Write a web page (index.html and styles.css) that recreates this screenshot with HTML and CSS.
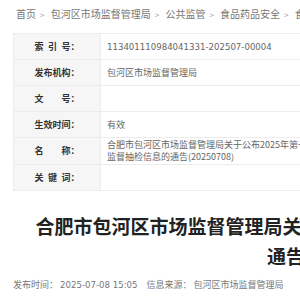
FILE: index.html
```html
<!DOCTYPE html>
<html lang="zh-CN">
<head>
    <meta charset="UTF-8">
    <title>合肥市包河区市场监督管理局</title>
    <link rel="stylesheet" href="styles.css">
</head>
<body>
    <div class="crumb">
        <a href="#">首页</a><span class="sep">&gt;</span>
        <a href="#">包河区市场监督管理局</a><span class="sep">&gt;</span>
        <a href="#">公共监管</a><span class="sep">&gt;</span>
        <a href="#">食品药品安全</a><span class="sep">&gt;</span>
        <a href="#">食品安全抽检</a>
    </div>
    <div class="main">
        <table class="info">
            <tr><th>索&ensp;引&ensp;号：</th><td class="num">113401110984041331-202507-00004</td></tr>
            <tr><th>发布机构：</th><td>包河区市场监督管理局</td></tr>
            <tr><th>文　　号：</th><td></td></tr>
            <tr><th>生效时间：</th><td>有效</td></tr>
            <tr><th>名　　称：</th><td>合肥市包河区市场监督管理局关于公布2025年第十五期食品安全<br>监督抽检信息的通告(20250708)</td></tr>
            <tr><th>关&ensp;键&ensp;词：</th><td></td></tr>
        </table>
        <h1 class="title">合肥市包河区市场监督管理局关于公布2025年第十五期食品<br>通告</h1>
        <div class="meta">
            <span>发布时间： <span class="num">2025-07-08 15:05</span></span>
            <span class="source">信息来源： 包河区市场监督管理局</span>
        </div>
    </div>
</body>
</html>
```

FILE: styles.css
```css
html, body {
    overflow: hidden;
}
body {
    margin: 0;
    padding: 0;
    font-family: "Noto Sans CJK SC", sans-serif;
    color: #333;
    background: #fff;
}
.crumb {
    padding: 7px 16px 0;
    font-size: 10px;
    line-height: 14px;
    white-space: nowrap;
    color: #777;
}
.crumb a {
    color: #777;
    text-decoration: none;
}
.crumb .sep {
    margin: 0 4px;
    font-size: 8px;
    color: #999;
}
.main {
    width: 546px;
    padding: 11px 13px 0;
}
.info {
    width: 100%;
    border-collapse: collapse;
    font-size: 9px;
    line-height: 12px;
}
.info th, .info td {
    height: 23px;
    padding: 1px 6px;
    border: 1px solid #ececec;
    vertical-align: middle;
}
.info th {
    width: 74px;
    background: #f6f6f6;
    color: #333;
    font-weight: bold;
    text-align: center;
    white-space: nowrap;
}
.info td {
    color: #666;
    text-align: left;
}
.num {
    font-family: "DejaVu Sans", "Noto Sans CJK SC", sans-serif;
    font-size: 8.6px;
}
.title {
    margin: 20px 0 0;
    font-size: 19px;
    line-height: 30px;
    font-weight: bold;
    color: #222;
    text-align: center;
    white-space: nowrap;
}
.meta {
    margin-top: 7px;
    padding-bottom: 8px;
    border-bottom: 1px solid #e6e6e6;
    font-size: 9px;
    line-height: 13px;
    color: #777;
    white-space: nowrap;
}
.meta .source {
    margin-left: 7px;
}
```
